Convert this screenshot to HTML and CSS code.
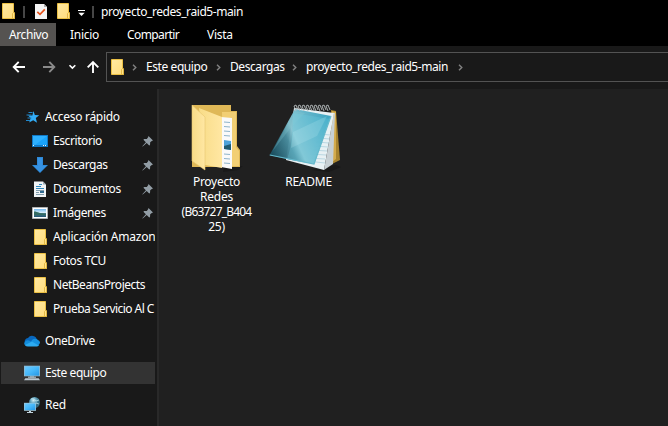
FILE: index.html
```html
<!DOCTYPE html>
<html lang="es">
<head>
<meta charset="utf-8">
<title>proyecto_redes_raid5-main</title>
<link rel="stylesheet" href="styles.css">
</head>
<body>
<svg class="defs" width="0" height="0">
  <defs>
    <linearGradient id="fold" x1="0" y1="0" x2="1" y2="1"><stop offset="0" stop-color="#ffe9a2"/><stop offset="1" stop-color="#ffdc7b"/></linearGradient>
    <linearGradient id="blue" x1="0" y1="0" x2="1" y2="1"><stop offset="0" stop-color="#6cc9ff"/><stop offset=".5" stop-color="#47b9fb"/><stop offset="1" stop-color="#2597e5"/></linearGradient>
    <linearGradient id="flap" x1="0" y1="0" x2="1" y2="0"><stop offset="0" stop-color="#f8dc87"/><stop offset="1" stop-color="#ffe7a3"/></linearGradient>
    <linearGradient id="glass" x1="0" y1=".7" x2="1" y2=".3"><stop offset="0" stop-color="#1c5263"/><stop offset=".3" stop-color="#4a8fa1"/><stop offset=".42" stop-color="#85c3d1"/><stop offset="1" stop-color="#3ba4c1"/></linearGradient>
    <linearGradient id="sky" x1="0" y1="0" x2="0" y2="1"><stop offset="0" stop-color="#74b9ef"/><stop offset=".45" stop-color="#d5edfa"/><stop offset=".55" stop-color="#477b83"/><stop offset="1" stop-color="#225673"/></linearGradient>
    <radialGradient id="globe" cx=".4" cy=".3"><stop offset="0" stop-color="#d6f1f7"/><stop offset=".5" stop-color="#6baac2"/><stop offset="1" stop-color="#31687f"/></radialGradient>
    <symbol id="folder" viewBox="0 0 14 17"><path d="M.5.5h11v9.7h1v5.3h-12z" fill="url(#fold)" stroke="#ebc044"/><path d="M10.5 15.5v-5l1-1h1v6z" fill="#ffe28a" stroke="#dcae35" stroke-width=".8"/></symbol>
    <symbol id="pin" viewBox="0 0 11 11"><path d="M6.5 0 11 4.4 9.8 5 8.2 6.3 8 9 7.2 9.6 4.7 7.1.7 10.6.3 10.2 3.9 6.3 1.4 3.8 2.2 3 4.8 2.9 6.1 1.2z" fill="#929da5"/></symbol>
    <symbol id="chev" viewBox="0 0 5 7"><path d="M1 .7 3.8 3.5 1 6.3" fill="none" stroke="#828282" stroke-width="1.4"/></symbol>
  </defs>
</svg>
<div class="window">
  <header class="titlebar">
    <svg class="folder"><use href="#folder"/></svg>
    <i class="sep"></i>
    <svg class="check" viewBox="0 0 12 15"><path d="M0 0h9l3 3v12H0z" fill="#f4f4f4"/><path d="M9 0v3h3z" fill="#adadad"/><path d="M2.3 7.8 5 10.3 9.8 5.3" fill="none" stroke="#e8541d" stroke-width="1.7"/></svg>
    <svg class="folder"><use href="#folder"/></svg>
    <svg class="custom" viewBox="0 0 7 6"><path d="M0 .5h7" stroke="#fff"/><path d="M.3 2.8h6.4L3.5 6z" fill="#fff"/></svg>
    <i class="sep"></i>
    <span class="title">proyecto_redes_raid5-main</span>
  </header>
  <nav class="tabs"><span class="active">Archivo</span><span class="t2">Inicio</span><span class="t3">Compartir</span><span class="t4">Vista</span></nav>
  <div class="toolbar">
    <svg class="arrows" viewBox="0 0 106 30">
      <g fill="none" stroke="#fff" stroke-width="1.9"><path d="M25 15H14M18.7 9.8 13.7 15l5 5.2"/><path d="M43 15h11M49.3 9.8l5 5.2-5 5.2" stroke="#8a8a8a"/><path d="m69.5 13.2 2.9 2.9 2.9-2.9" stroke-width="1.6"/><path d="M93 21V10.5M87.7 15.3 93 10l5.3 5.3"/></g>
    </svg>
    <div class="address">
      <svg class="folder"><use href="#folder"/></svg>
      <svg class="chev"><use href="#chev"/></svg><span class="c1">Este equipo</span>
      <svg class="chev"><use href="#chev"/></svg><span class="c2">Descargas</span>
      <svg class="chev"><use href="#chev"/></svg><span class="c3">proyecto_redes_raid5-main</span>
      <svg class="chev"><use href="#chev"/></svg>
    </div>
  </div>
  <main class="body">
    <aside class="side">
      <div class="row root quick"><svg class="ic" viewBox="0 0 16 16"><path d="m9.5 2 1.3 4.1 4.4.1-3.4 2.8 1.2 4.8-3.8-2.6-4 2.4 1.5-4.5-2.6-2.6h4.2z" fill="#32adf7"/><path d="M4.5 3.5h4M2.5 6h5M3.5 9h4M2 11.5h4" stroke="#2187ca"/></svg><span>Acceso rápido</span></div>
      <div class="row"><svg class="ic" viewBox="0 0 16 16"><path d="M0 2h16v12H0z" fill="#1179c5"/><path d="M1 3h14v9H1z" fill="#1aa4fb"/><path d="M1 3h14L3 12H1z" fill="#2eb0ff"/><path d="M1 12.5h1m9 0h1m1 0h1" stroke="#e9f7ff"/></svg><span>Escritorio</span><svg class="pin"><use href="#pin"/></svg></div>
      <div class="row"><svg class="ic" viewBox="0 0 16 16"><path d="M5 0h6v8h5l-8 8-8-8h5z" fill="#2d89d8"/><path d="M6 1h4v8h4l-6 6-6-6h4z" fill="#3792e2"/></svg><span>Descargas</span><svg class="pin"><use href="#pin"/></svg></div>
      <div class="row"><svg class="ic" viewBox="0 0 16 16"><path d="M2 .5h9l3 3V16H2z" fill="#f1f4f6"/><path d="M11 .5v3h3z" fill="#9eabb3"/><path d="M7 3.5h3M4 5.5h5M4 7.5h8" stroke="#2e87bd"/><path d="M4 9.5h8M4 11.5h3M4 13.5h8" stroke="#819cac"/><path d="M8 10h4v2H8z" fill="#306b92"/></svg><span>Documentos</span><svg class="pin"><use href="#pin"/></svg></div>
      <div class="row"><svg class="ic" viewBox="0 0 16 16"><path d="M.5 2.5h15v11H.5z" fill="#fff" stroke="#b0b4b6"/><path d="M2 4h12v8H2z" fill="url(#sky)"/><path d="M2 6.5c4 0 6 2.4 12 2.5v1H2z" fill="#356c62"/></svg><span>Imágenes</span><svg class="pin"><use href="#pin"/></svg></div>
      <div class="row f"><svg class="folder"><use href="#folder"/></svg><span class="w1">Aplicación Amazon</span></div>
      <div class="row f"><svg class="folder"><use href="#folder"/></svg><span>Fotos TCU</span></div>
      <div class="row f"><svg class="folder"><use href="#folder"/></svg><span class="w2">NetBeansProjects</span></div>
      <div class="row f"><svg class="folder"><use href="#folder"/></svg><span class="w3">Prueba Servicio Al C</span></div>
      <div class="row root"><svg class="ic" viewBox="0 0 16 16"><path d="M1 10a3.5 3.5 0 0 1 3-5 5 5 0 0 1 9 2l1 5H2z" fill="#0867bd"/><path d="M8 7a4 4 0 0 1 6 0 3 3 0 0 1 2 3l-2 3-7-4z" fill="#1590df"/><path d="M.2 11A3.5 3.5 0 0 1 5 7.6L15 13H3a3 3 0 0 1-2.8-2z" fill="#138ddc"/><path d="m1 12 7-3.5 7 4.2-2 .8H4q-2 0-3-1.5z" fill="#2caaf0"/></svg><span>OneDrive</span></div>
      <div class="row root selected"><svg class="ic" viewBox="0 0 16 16"><path d="M0 .7h16v10.6H0z" fill="#8fb9d0"/><path d="M.8 1.4h14.4v9.2H.8z" fill="url(#blue)"/><path d="M6 11h4v1.4H6z" fill="#7995a4"/><path d="M4 12.2h8" stroke="#c2d3dc"/><path d="m1.3 13.3-1.3 2h16l-1.3-2z" fill="#b9c7d0"/></svg><span>Este equipo</span></div>
      <div class="row root net"><svg class="ic" viewBox="0 0 16 16"><circle cx="10.5" cy="5.5" r="5.5" fill="url(#globe)"/><path d="M7 2c3-1 3 1 5 2l3-1M9 9l3-3 3 1" fill="none" stroke="#c5e9ef" stroke-width=".7"/><path d="M0 5.8h12v8H0z" fill="#9dc6da"/><path d="M.7 6.5h10.6V13H.7z" fill="url(#blue)"/><path d="M5 14h2v1H5zM3 15h6v1H3z" fill="#c4d5df"/></svg><span>Red</span></div>
    </aside>
    <section class="files">
      <article class="file">
        <svg viewBox="0 0 52 68"><path d="m33 63 19-1-5 4-15 2z" fill="#111" opacity=".5"/><path d="M1 1h39v6h6v35l3 4v17H1z" fill="#dfb857"/><path d="M31 8h14v35l3 4v15H32z" fill="#f2cf74"/><path d="m30 13 11 1v51l-11-2z" fill="#fafafa"/><g stroke="#8fb4ca"><path d="m33 18 6 .5m-6 4 6 .5m-6 4 6 .5m-6 4 6 .5m-6 18 6 .5m-6 4 6 .5m-6 4 6 .5"/></g><path d="m33 36 7 1v9l-7-1z" fill="#4da3da"/><path d="m33 42 7-2v6l-7-1z" fill="#205c72"/><path d="m8 4 23 9v51L14 61z" fill="url(#flap)"/><path d="m1 1 13 12v53L1 57z" fill="url(#flap)" stroke="#e8c66e" stroke-width=".6"/></svg>
        <p>Proyecto<br>Redes<br><span class="b1">(B63727_B404</span><br>25)</p>
      </article>
      <article class="file">
        <svg class="note" viewBox="0 0 72 68"><path d="m43 66 24-5 5 2-12 5z" fill="#111" opacity=".5"/><path d="m62 6 5 1 4 49-10 5z" fill="#a8842e"/><path d="m63 7 4 1v47l-4 3z" fill="#d4ab4b"/><path d="m25 4 40 5-10 57-38-10z" fill="#e8f1f4"/><path d="m65 9-10 57 9-6 2-51z" fill="#c7d0d4"/><g stroke="#a5cbda" stroke-width=".7"><path d="m51 30 10 1M49 34l12 1M47 38l13 1M45 42l14 1M43 46l15 1M41 50l16 1M39 54l17 1M38 57l18 2"/></g><path d="m26 5 36 7L45 60Q20 56 .7 51z" fill="url(#glass)" opacity=".96"/><path d="m26 7 10 2C20 24 11 38 3 48z" fill="#8acbd5" opacity=".25"/><path d="M24 9c0 17-1 33-6 46l27 5 16-45z" fill="#6bd2e6" opacity=".25"/><path d="m24 28 34-16-10 20-26 12z" fill="#c7f2f6" opacity=".2"/><path d="m.7 51 44.3 9 17-48" fill="none" stroke="#64b9cc" stroke-width="1.2"/><g fill="none" stroke="#b4babb" stroke-width=".9"><path d="m27 7-2-5 2-1 2 5m2 1-2-5 2-1 2 5m2 1-2-5 2-1 2 5m2 1-2-5 2-1 2 5m2 1-2-5 2-1 2 5m2 1-2-5 2-1 2 5m2 1-2-5 2-1 2 5m2 1-2-5 2-1 2 5m2 1-2-5 2-1 2 5"/></g></svg>
        <p>README</p>
      </article>
    </section>
  </main>
</div>
</body>
</html>
```
FILE: styles.css
```css
* { box-sizing: border-box; }
body { margin: 0; background: #202020; }
.defs { display: block; height: 0; }
.window { width: 668px; height: 426px; overflow: hidden; display: flex; flex-direction: column; color: #fff; font: 12px/16px "Noto Sans", "Open Sans", sans-serif; letter-spacing: -.42px; }
svg { flex: none; display: block; }
span { white-space: nowrap; }
.folder { width: 14px; height: 17px; }
.titlebar { height: 23px; background: #000; display: flex; align-items: center; padding-left: 2px; }
.sep { width: 2px; height: 12px; background: #464646; margin-left: 7px; }
.check { width: 12px; height: 15px; margin-left: 10px; }
.check + .folder { margin-left: 10px; }
.custom { width: 7px; height: 6px; margin: 3px 0 0 7px; }
.title { margin: 1px 0 0 7px; }
.tabs { height: 23px; background: #000; display: flex; line-height: 24px; }
.active { width: 56px; background: #555351; padding-left: 9px; }
.t2 { margin-left: 14px; width: 57px; letter-spacing: -.5px; }
.t2, .t4 { letter-spacing: -.3px; }
.t3 { width: 80px; letter-spacing: -.6px; }
.toolbar { height: 43px; background: #191919; display: flex; padding-top: 6px; }
.arrows { width: 106px; height: 30px; }
.address { flex: 1; height: 30px; border: 1px solid #535353; border-right: 0; display: flex; align-items: center; padding-left: 4px; }
.chev { width: 5px; height: 7px; margin: 0 9px 0 9px; }
.folder + .chev { margin: 0 9px 0 7px; }
.c1 { width: 61px; }
.c2 { width: 53px; }
.c3 { width: 143px; }
.body { flex: 1; display: flex; }
.side { width: 159px; background: #191919; border-right: 2px solid #292929; padding: 16px 2px 0 1px; overflow: hidden; }
.row { height: 24px; display: flex; align-items: center; padding-left: 31px; }
.row span { margin-left: 5px; width: 103px; overflow: hidden; }
.row.f .folder { margin: 0 0 0 2px; }
.row .pin { width: 11px; height: 11px; margin-left: -14px; }
.row .ic { width: 16px; height: 16px; }
.root { padding-left: 23px; margin-top: 8px; }
.quick { margin-top: 0; letter-spacing: -.3px; }
.row .w1 { letter-spacing: -.23px; }
.row .w2 { letter-spacing: -.48px; }
.row .w3 { letter-spacing: -.55px; }
.selected { height: 22px; margin: 9px 0 1px; background: #333; }
.net { padding-top: 1px; letter-spacing: -.25px; }
.files { flex: 1; background: #202020; display: flex; padding: 15px 0 0 21px; letter-spacing: -.25px; }
.file { width: 73px; display: flex; flex-direction: column; align-items: center; line-height: 15px; text-align: center; }
.file + .file { margin-left: 19px; }
.file p { margin: 0; }
.b1 { letter-spacing: -.8px; }
.file svg { width: 52px; height: 68px; margin-bottom: 2px; }
.file .note { width: 72px; margin-left: -8px; }
```
